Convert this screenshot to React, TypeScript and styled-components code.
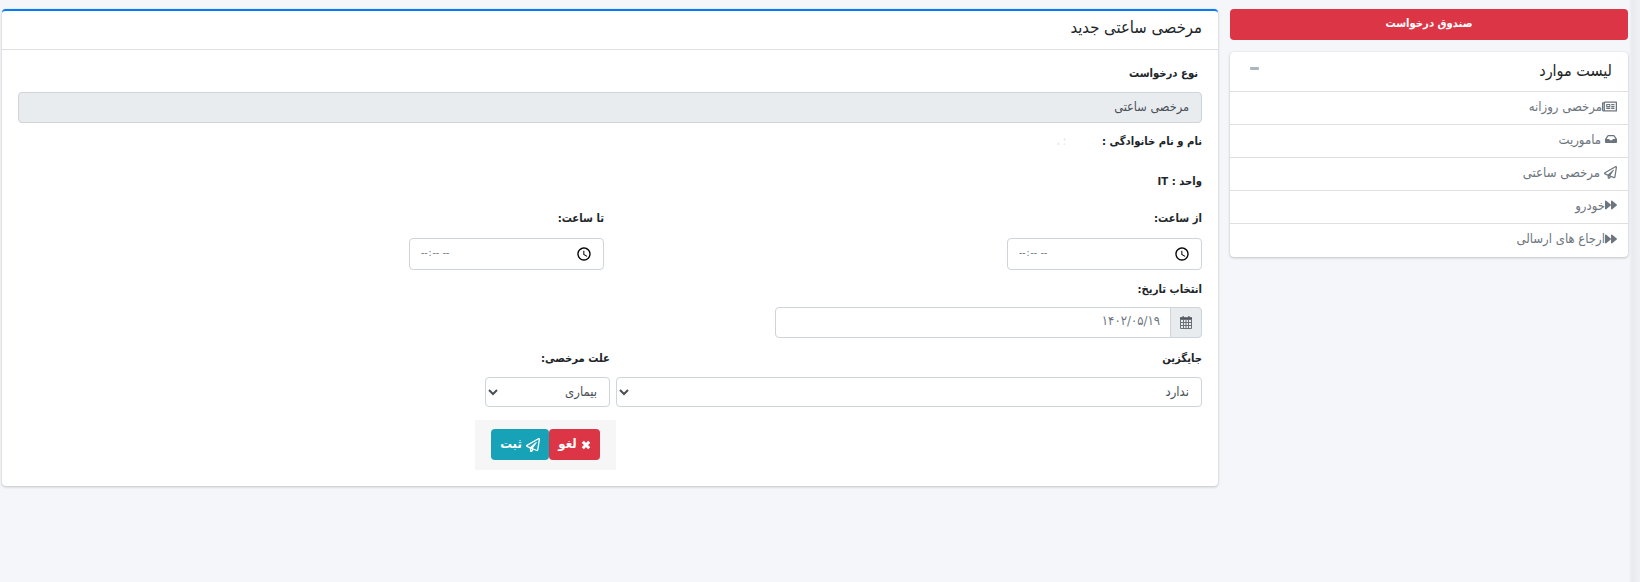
import React from "react";
import styled, { createGlobalStyle } from "styled-components";
import { FaForward, FaInbox, FaRegNewspaper, FaRegPaperPlane } from "react-icons/fa";

const GlobalStyle = createGlobalStyle`
  * {
    box-sizing: border-box;
  }
  html, body {
    margin: 0;
    height: 100%;
  }
  body {
    background: linear-gradient(to right, #f4f6f9 1629px, #e8eaed 1632px, #f0f1f4 1640px);
    font-family: "DejaVu Sans", sans-serif;
    font-stretch: condensed;
    font-size: 13px;
    color: #212529;
    direction: rtl;
  }
  input, select, button {
    font-family: inherit;
    font-stretch: inherit;
  }
`;

const Page = styled.div`
  display: grid;
  grid-template-columns: 398px 1216px;
  column-gap: 12px;
  align-items: start;
  padding: 9px 12px 0 2px;
`;

const Sidebar = styled.aside`
  display: flex;
  flex-direction: column;
  gap: 12px;
`;

const InboxButton = styled.button`
  height: 31px;
  padding: 0 0 2px;
  border: 0;
  border-radius: 4px;
  background: #dc3545;
  color: #fff;
  font-size: 11.2px;
  font-weight: bold;
`;

const Card = styled.section`
  background: #fff;
  border-radius: 4px;
  box-shadow: 0 0 1px rgba(0, 0, 0, 0.125), 0 1px 3px rgba(0, 0, 0, 0.2);
`;

const MainCard = styled(Card)`
  border-top: 2px solid #007bff;
  min-height: 477px;
`;

const ListHeader = styled.header`
  display: flex;
  justify-content: space-between;
  align-items: center;
  height: 40px;
  padding: 0 16px 3px;
  font-size: 16px;
  border-bottom: 1px solid #dfdfdf;
`;

const Collapse = styled.span`
  width: 9px;
  height: 3px;
  margin: 0 0 3px 4px;
  border-radius: 1px;
  background: #adb5bd;
`;

const ListItem = styled.div<{ $gap: number }>`
  display: flex;
  align-items: center;
  gap: ${(p) => p.$gap}px;
  height: 33px;
  padding: 0 11px 4px;
  color: #6c757d;
  font-size: 13px;
  border-bottom: 1px solid #dfdfdf;
  &:last-child {
    border-bottom: 0;
  }
`;

const CardTitle = styled.header`
  height: 39px;
  padding: 0 16px 5px;
  display: flex;
  align-items: center;
  font-size: 16.5px;
  border-bottom: 1px solid #dfdfdf;
`;

const Body = styled.div`
  padding: 15px 16px 15px 16px;
`;

const Label = styled.div`
  font-size: 11.2px;
  font-weight: bold;
  line-height: 18px;
`;

const RequestLabel = styled(Label)`
  padding-right: 4px;
  margin-bottom: 9px;
`;

const ReadOnly = styled.div`
  height: 31px;
  display: flex;
  align-items: center;
  padding: 0 12px 2px;
  border: 1px solid #ced4da;
  border-radius: 4px;
  background: #e9ecef;
  color: #495057;
  font-size: 12.6px;
`;

const InfoLine = styled(Label)<{ $top: number }>`
  margin-top: ${(p) => p.$top}px;
`;

const Masked = styled.span`
  margin-right: 36px;
  color: #e4e4e4;
  font-weight: normal;
  letter-spacing: 10px;
`;

const Row = styled.div<{ $top: number }>`
  display: flex;
  margin-top: ${(p) => p.$top}px;
`;

const TimeColumn = styled.div`
  flex: none;
  width: 598px;
`;

const TimeInput = styled.input`
  display: block;
  width: 195px;
  height: 32px;
  margin-top: 10px;
  padding: 0 8px 0 10px;
  border: 1px solid #ced4da;
  border-radius: 4px;
  background: #fff;
  color: #6c757d;
  font-size: 10px;
  letter-spacing: -0.5px;
  &::-webkit-datetime-edit {
    margin-top: -4px;
  }
  &::-webkit-calendar-picker-indicator {
    width: 16px;
    height: 16px;
    margin: 0;
  }
`;

const DateGroup = styled.div`
  display: flex;
  width: 427px;
  height: 31px;
  margin-top: 8px;
`;

const Addon = styled.span`
  display: flex;
  align-items: center;
  justify-content: center;
  width: 32px;
  border: 1px solid #ced4da;
  border-radius: 0 4px 4px 0;
  background: #e9ecef;
`;

const DateInput = styled.input`
  flex: 1;
  min-width: 0;
  margin-right: -1px;
  padding: 0 10px 4px;
  border: 1px solid #ced4da;
  border-radius: 4px 0 0 4px;
  color: #6c757d;
  font-size: 13px;
`;

const SelectColumn = styled.div<{ $width: number; $after?: number }>`
  flex: none;
  width: ${(p) => p.$width}px;
  margin-left: ${(p) => p.$after ?? 0}px;
`;

const Select = styled.select`
  display: block;
  width: 100%;
  height: 30px;
  margin-top: 9px;
  padding: 0 8px 2px;
  border: 1px solid #ced4da;
  border-radius: 4px;
  background: #fff;
  color: #495057;
  font-size: 13px;
`;

const Actions = styled.div`
  display: flex;
  justify-content: center;
  width: 141px;
  height: 50px;
  margin: 13px 586px 0 0;
  padding-top: 9px;
  background: #f6f6f6;
`;

const ActionButton = styled.button<{ $bg: string; $width: number }>`
  display: flex;
  flex: none;
  align-items: center;
  justify-content: center;
  gap: 4px;
  width: ${(p) => p.$width}px;
  height: 31px;
  padding: 0 0 3px;
  border: 0;
  border-radius: 4px;
  color: #fff;
  font-size: 13px;
  font-weight: bold;
  background: ${(p) => p.$bg};
`;

const ButtonGlyph = styled.span`
  display: flex;
  padding-top: 3px;
`;

const CalendarIcon = () => (
  <svg width="12" height="13" viewBox="0 0 12 13" aria-hidden="true">
    <path d="M2.5 0h1.2v2.4H2.5zM8.3 0h1.2v2.4H8.3z" fill="#55595f" />
    <path d="M0 1.2h12v2.6H0z" fill="#55595f" />
    <path
      d="M0.5 3.5h11v9h-11zM0.5 6.5h11M0.5 9.5h11M3.5 3.5v9M6 3.5v9M8.5 3.5v9"
      fill="none"
      stroke="#6b7076"
      strokeWidth="1"
    />
  </svg>
);

const CrossIcon = () => (
  <svg width="10" height="10" viewBox="0 0 10 10" aria-hidden="true">
    <path d="M1.8 1.8l6.4 6.4M8.2 1.8l-6.4 6.4" stroke="#fff" strokeWidth="3" />
  </svg>
);

const sideItems = [
  { icon: <FaRegNewspaper size={15} />, text: "مرخصی روزانه", gap: 0 },
  { icon: <FaInbox size={12} />, text: "ماموریت", gap: 4 },
  { icon: <FaRegPaperPlane size={13} />, text: "مرخصی ساعتی", gap: 4 },
  { icon: <FaForward size={12} />, text: "خودرو", gap: 0 },
  { icon: <FaForward size={12} />, text: "ارجاع های ارسالی", gap: 0 },
];

const App: React.FC = () => {
  return (
    <>
      <GlobalStyle />
      <Page>
        <Sidebar>
          <InboxButton>صندوق درخواست</InboxButton>
          <Card>
            <ListHeader>
              لیست موارد
              <Collapse />
            </ListHeader>
            {sideItems.map((item) => (
              <ListItem key={item.text} $gap={item.gap}>
                {item.icon}
                {item.text}
              </ListItem>
            ))}
          </Card>
        </Sidebar>
        <MainCard>
          <CardTitle>مرخصی ساعتی جدید</CardTitle>
          <Body>
            <RequestLabel>نوع درخواست</RequestLabel>
            <ReadOnly>مرخصی ساعتی</ReadOnly>
            <InfoLine $top={10}>
              نام و نام خانوادگی :<Masked>؛ ،</Masked>
            </InfoLine>
            <InfoLine $top={22}>واحد : IT</InfoLine>
            <Row $top={19}>
              <TimeColumn>
                <Label>از ساعت:</Label>
                <TimeInput type="time" />
              </TimeColumn>
              <TimeColumn>
                <Label>تا ساعت:</Label>
                <TimeInput type="time" />
              </TimeColumn>
            </Row>
            <Row $top={11}>
              <div>
                <Label>انتخاب تاریخ:</Label>
                <DateGroup>
                  <Addon>
                    <CalendarIcon />
                  </Addon>
                  <DateInput readOnly value="۱۴۰۲/۰۵/۱۹" />
                </DateGroup>
              </div>
            </Row>
            <Row $top={12}>
              <SelectColumn $width={586} $after={6}>
                <Label>جایگزین</Label>
                <Select defaultValue="none">
                  <option value="none">ندارد</option>
                </Select>
              </SelectColumn>
              <SelectColumn $width={125}>
                <Label>علت مرخصی:</Label>
                <Select defaultValue="sick">
                  <option value="sick">بیماری</option>
                </Select>
              </SelectColumn>
            </Row>
            <Actions>
              <ActionButton $bg="#dc3545" $width={51}>
                <ButtonGlyph>
                  <CrossIcon />
                </ButtonGlyph>
                لغو
              </ActionButton>
              <ActionButton $bg="#17a2b8" $width={58}>
                <ButtonGlyph>
                  <FaRegPaperPlane size={14} />
                </ButtonGlyph>
                ثبت
              </ActionButton>
            </Actions>
          </Body>
        </MainCard>
      </Page>
    </>
  );
};

export default App;
